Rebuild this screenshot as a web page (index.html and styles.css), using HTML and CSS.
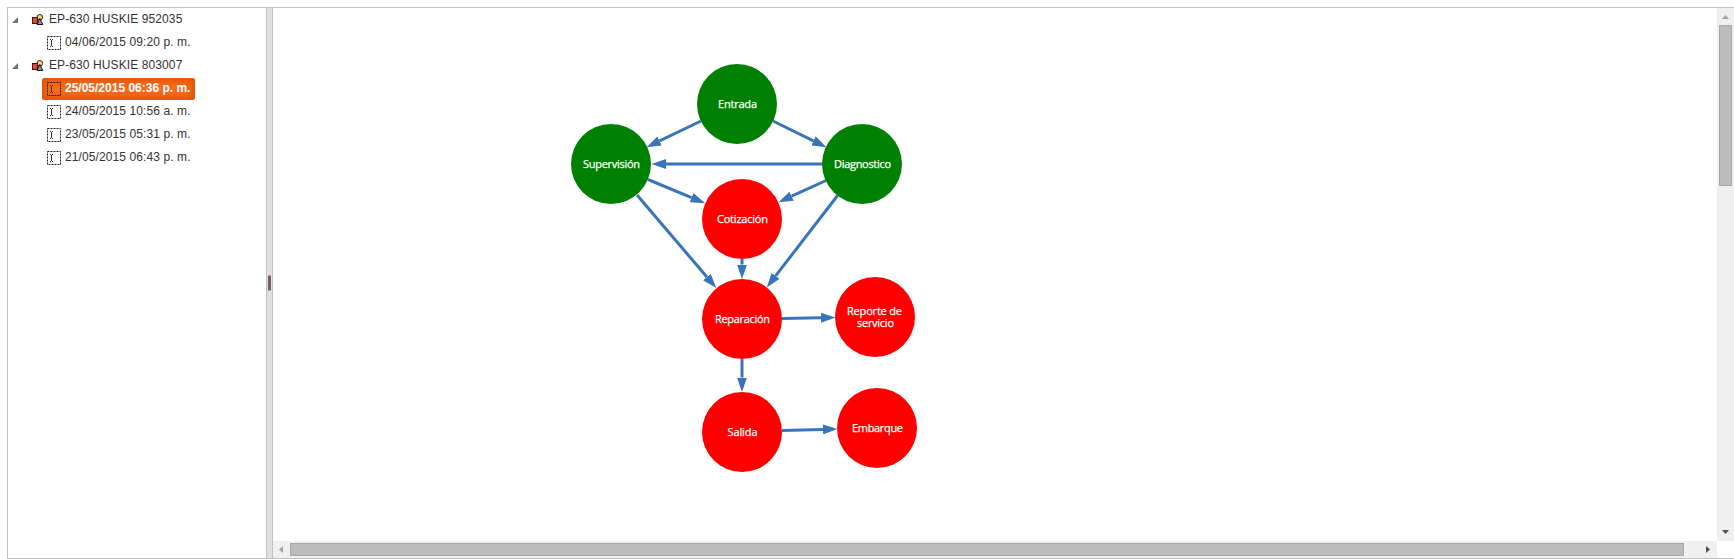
FILE: index.html
```html
<!DOCTYPE html>
<html lang="es">
<head>
<meta charset="utf-8">
<title>Flujo</title>
<link rel="stylesheet" href="styles.css">
</head>
<body>
<svg class="defs" width="0" height="0" aria-hidden="true">
  <symbol id="expand" viewBox="0 0 6 6"><path d="M6 0V6H0Z" fill="#7d6e6a"/></symbol>
  <symbol id="equip" viewBox="0 0 12 12">
    <circle cx="7.800" cy="3.300" r="2.800" fill="#fbd880" stroke="#2b2116"/>
    <rect x=".5" y="3.500" width="5" height="6" fill="#e8452a" stroke="#3a1712"/>
    <path d="M7.800 4.500L10.800 10.500H5Z" fill="#8798b8" stroke="#111"/>
  </symbol>
  <symbol id="field" viewBox="0 0 14 14">
    <rect x=".5" y=".5" width="13" height="13" fill="none" stroke="#222" stroke-dasharray="2 1"/>
    <path d="M3 3.500H4M5 3.500H6M4.500 4V10M3 10.500H4M5 10.500H6" fill="none" stroke="#333"/>
  </symbol>
</svg>
<div class="splitter">
  <ul class="tree">
    <li class="row parent"><svg class="expand"><use href="#expand"/></svg><svg class="equip"><use href="#equip"/></svg><span>EP-630 HUSKIE 952035</span></li>
    <li class="row child"><span class="item"><svg class="field"><use href="#field"/></svg><span>04/06/2015 09:20 p. m.</span></span></li>
    <li class="row parent"><svg class="expand"><use href="#expand"/></svg><svg class="equip"><use href="#equip"/></svg><span>EP-630 HUSKIE 803007</span></li>
    <li class="row child"><span class="item selected"><svg class="field"><use href="#field"/></svg><span>25/05/2015 06:36 p. m.</span></span></li>
    <li class="row child"><span class="item"><svg class="field"><use href="#field"/></svg><span>24/05/2015 10:56 a. m.</span></span></li>
    <li class="row child"><span class="item"><svg class="field"><use href="#field"/></svg><span>23/05/2015 05:31 p. m.</span></span></li>
    <li class="row child"><span class="item"><svg class="field"><use href="#field"/></svg><span>21/05/2015 06:43 p. m.</span></span></li>
  </ul>
  <div class="bar"><i class="grip"></i></div>
  <div class="pane">
    <svg class="diagram" viewBox="273 8 1444 533" width="1444" height="533">
      <defs>
        <marker id="head" markerUnits="userSpaceOnUse" markerWidth="15" markerHeight="10" refX="0" refY="5" orient="auto"><path d="M0 0L14.500 5L0 10Z" fill="#3a74b8"/></marker>
      </defs>
      <g class="edges">
        <path d="M701 121L659.600 140.900"/>
        <path d="M773 121L813.400 140.800"/>
        <path d="M822 164H666"/>
        <path d="M648 179.500L691.600 197.600"/>
        <path d="M826 180.500L791.700 196.200"/>
        <path d="M637 195L706.900 277"/>
        <path d="M838 195L775.600 275.900"/>
        <path d="M742 259V264.500"/>
        <path d="M782 318.500L821 317.800"/>
        <path d="M742 359V377.500"/>
        <path d="M782 430.500L823 429.400"/>
      </g>
      <g class="done">
        <circle cx="737" cy="104" r="40"/><circle cx="611" cy="164" r="40"/><circle cx="862" cy="164" r="40"/>
      </g>
      <g class="pending">
        <circle cx="742" cy="219" r="40"/><circle cx="742" cy="319" r="40"/><circle cx="875" cy="317" r="40"/><circle cx="742" cy="432" r="40"/><circle cx="877" cy="428" r="40"/>
      </g>
      <g class="labels">
        <text x="737.500" y="108" textLength="39">Entrada</text>
        <text x="611.500" y="168" textLength="57">Supervisión</text>
        <text x="862.500" y="168" textLength="57">Diagnostico</text>
        <text x="742.500" y="223" textLength="51">Cotización</text>
        <text x="742.500" y="323" textLength="55">Reparación</text>
        <text x="874.500" y="315" textLength="55">Reporte de</text>
        <text x="875.500" y="327" textLength="37">servicio</text>
        <text x="742.500" y="436" textLength="30">Salida</text>
        <text x="877.500" y="432" textLength="51">Embarque</text>
      </g>
    </svg>
    <div class="vscroll">
      <svg class="arrow" viewBox="0 0 17 17"><path d="M5 11L8.500 7L12 11Z" fill="#a3a3a3"/></svg>
      <i class="vthumb"></i>
      <svg class="arrow end" viewBox="0 0 17 17"><path d="M5 6L8.500 10L12 6Z" fill="#505050"/></svg>
    </div>
    <div class="hscroll">
      <svg class="arrow" viewBox="0 0 17 17"><path d="M10 5L6 8.500L10 12Z" fill="#a3a3a3"/></svg>
      <i class="hthumb"></i>
      <svg class="arrow end" viewBox="0 0 17 17"><path d="M6 5L10 8.500L6 12Z" fill="#505050"/></svg>
    </div>
  </div>
</div>
</body>
</html>
```
FILE: styles.css
```css
* { box-sizing: border-box; }
body { margin: 0; padding: 7px 0 0 7px; height: 559px; overflow: hidden; background: #fff; font: 12px/23px "Liberation Sans", Arial, sans-serif; letter-spacing: .1px; color: #333; }
.defs { display: block; height: 0; }
svg { display: block; flex: none; }
.splitter { display: grid; grid-template-columns: 258px 7px 1461px; height: 552px; border: 1px solid #c0c0c0; border-right: 0; }
.tree { margin: 0; padding: 0; list-style: none; white-space: nowrap; }
.row { display: flex; align-items: center; height: 23px; }
.parent { padding-left: 4px; }
.expand { width: 6px; height: 6px; margin-top: 1px; }
.equip { width: 12px; height: 12px; margin: 1px 5px 0 14px; }
.child { padding-left: 34px; align-items: flex-start; }
.item { display: flex; align-items: flex-start; height: 22px; line-height: 22px; padding: 0 5px; border-radius: 3px; margin-top: 1px; }
.item span { margin-top: -1px; }
.field { width: 14px; height: 14px; margin: 4px 4px 0 0; }
.selected { color: #fff; font-weight: bold; letter-spacing: 0; background: #f76a1f; box-shadow: inset 0 0 7px 3px #e35200; }
.bar { display: flex; align-items: center; justify-content: center; background: #e0e0e0; border: solid #c0c0c0; border-width: 0 1px; }
.grip { width: 3px; height: 16px; background: #75625e; border: solid #aaa; border-width: 1px 0; }
.pane { display: grid; grid-template: 533px 17px / 1444px 17px; }
.edges { fill: none; stroke: #3a74b8; stroke-width: 3; }
.edges path { marker-end: url(#head); }
marker path { stroke: none; }
.done { fill: #008000; }
.pending { fill: #f00; }
.labels { fill: #fff; stroke: #fff; stroke-width: .25; font: 11px "Open Sans", "Noto Sans", sans-serif; letter-spacing: 0; text-anchor: middle; }
.vscroll, .hscroll { display: flex; background: #f0f0f0; }
.vscroll { flex-direction: column; }
.arrow { width: 17px; height: 17px; }
.vthumb { width: 13px; height: 161px; margin: 0 2px; background: #bcbcbc; border: 1px solid #a8a8a8; }
.hthumb { width: 1394px; height: 13px; margin: 2px 0; background: #bcbcbc; border: 1px solid #a8a8a8; }
.vscroll .end { margin-top: auto; }
.hscroll .end { margin-left: auto; }
```
